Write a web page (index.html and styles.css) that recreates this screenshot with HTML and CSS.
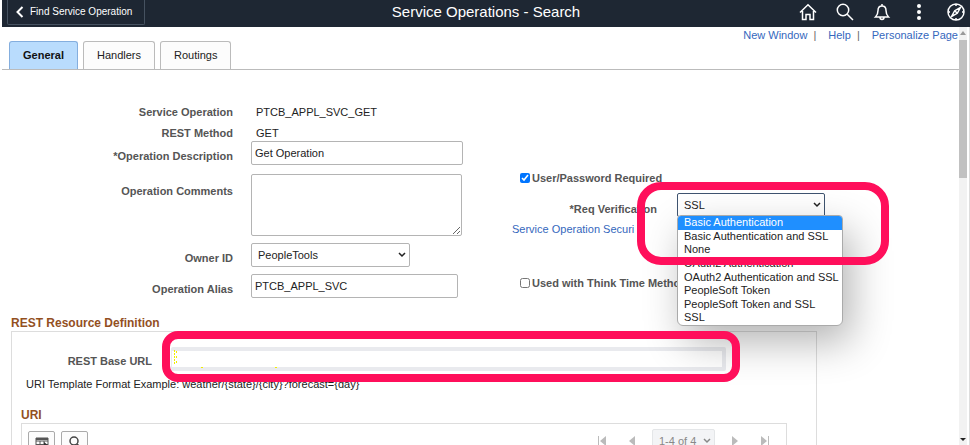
FILE: index.html
```html
<!DOCTYPE html>
<html lang="en">
<head>
<meta charset="utf-8">
<title>Service Operations - Search</title>
<link rel="stylesheet" href="styles.css">
</head>
<body>
<header class="banner">
  <div class="banner-side"><button class="back" type="button"><svg width="8" height="12" viewBox="0 0 8 12"><path d="M6.500 1 1.500 6l5 5" fill="none" stroke="currentColor" stroke-width="2"/></svg>Find Service Operation</button></div>
  <h1>Service Operations - Search</h1>
  <nav class="banner-side tools" aria-label="Tools">
    <button type="button" aria-label="Home"><svg width="18" height="18" viewBox="0 0 18 18"><path d="M1 9.500 9 1.700l8 7.800M3.500 8v8.500h3.500v-5h4v5h3.500V8"/></svg></button>
    <button type="button" aria-label="Search"><svg width="18" height="18" viewBox="0 0 18 18"><circle cx="7" cy="7" r="5.700"/><path d="m11.200 11.200 5.800 5.800"/></svg></button>
    <button type="button" aria-label="Notifications"><svg width="18" height="18" viewBox="0 0 18 18"><path d="M2.500 14h13c-2-2-2.500-3-2.500-6.500C13 4.500 11.500 3 9 3S5 4.500 5 7.500C5 11 4.500 12 2.500 14zM9 1v2M7 14.500c0 2.500 4 2.500 4 0"/></svg></button>
    <button type="button" aria-label="Actions"><svg width="18" height="18" viewBox="0 0 18 18"><g fill="currentColor" stroke="none"><circle cx="9" cy="3" r="2"/><circle cx="9" cy="9" r="2"/><circle cx="9" cy="15" r="2"/></g></svg></button>
    <button type="button" aria-label="Navigation"><svg width="18" height="18" viewBox="0 0 18 18"><circle cx="9" cy="9" r="8"/><path d="m13.500 4.500-3.200 5.800-5.800 3.200 3.200-5.800zM9 1v2M9 15v2M1 9h2M15 9h2M7.700 7.700l2.600 2.600"/></svg></button>
  </nav>
</header>
<div class="body">
  <main>
    <nav class="page-links" aria-label="Page"><a href="#">New Window</a><span class="bar">|</span><a href="#">Help</a><span class="bar">|</span><a href="#">Personalize Page</a></nav>
    <nav class="tabs" aria-label="Sections"><a class="tab active" href="#">General</a><a class="tab" href="#">Handlers</a><a class="tab" href="#">Routings</a></nav>
    <form class="form">
      <div class="left">
        <div class="row plain"><span class="label">Service Operation</span><span class="value">PTCB_APPL_SVC_GET</span></div>
        <div class="row plain"><span class="label">REST Method</span><span class="value">GET</span></div>
        <div class="row"><label class="label" for="desc">*Operation Description</label><input class="field desc" id="desc" type="text" value="Get Operation"></div>
        <div class="row comments-row"><label class="label" for="comments">Operation Comments</label><textarea class="field comments" id="comments"></textarea></div>
        <div class="row"><label class="label" for="owner">Owner ID</label><span class="picker owner"><select class="field" id="owner"><option>PeopleTools</option></select><svg class="arrow" width="8" height="6" viewBox="0 0 8 6"><path d="m1 1 3 3 3-3"/></svg></span></div>
        <div class="row"><label class="label" for="alias">Operation Alias</label><input class="field alias" id="alias" type="text" value="PTCB_APPL_SVC"></div>
      </div>
      <div class="right">
        <div class="check"><input id="password" type="checkbox" checked><label for="password">User/Password Required</label></div>
        <div class="verify">
          <label class="label" for="verification">*Req Verification</label>
          <span class="picker verification"><select class="field" id="verification"><option>SSL</option></select><svg class="arrow" width="8" height="6" viewBox="0 0 8 6"><path d="m1 1 3 3 3-3"/></svg>
            <ul class="menu">
              <li class="current">Basic Authentication</li><li>Basic Authentication and SSL</li><li>None</li><li>OAuth2 Authentication</li><li>OAuth2 Authentication and SSL</li><li>PeopleSoft Token</li><li>PeopleSoft Token and SSL</li><li>SSL</li>
            </ul>
          </span>
          <span class="highlight highlight-verify"></span>
        </div>
        <a class="security" href="#">Service Operation Securi</a>
        <div class="check"><input id="think" type="checkbox"><label for="think">Used with Think Time Method</label></div>
      </div>
    </form>
    <section class="resource">
      <h2>REST Resource Definition</h2>
      <div class="group">
        <div class="url-row"><label class="label" for="url">REST Base URL</label><span class="url-wrap"><input class="url" id="url" type="text" readonly><svg class="marks" width="110" height="20" viewBox="0 0 110 20"><path d="M1.500 1v15M3.500 2v2M3.500 7v2M3.500 12v2M28 18.500h3M102 18.500h2" fill="none" stroke="#f0ee00" stroke-width="1" stroke-dasharray="2 1"/></svg><span class="highlight highlight-url"></span></span></div>
        <p>URI Template Format Example: weather/{state}/{city}?forecast={day}</p>
        <h3>URI</h3>
        <div class="grid-bar">
          <button class="tool" type="button" aria-label="Personalize grid"><svg width="14" height="13" viewBox="0 0 14 13"><path d="M1 1h12v10H1zM1 4h12M1 7.500h12M5 4v7M9 4v7" fill="none" stroke="#555"/><path d="M1 1h12v2H1z" fill="#555"/><path d="m9 5 5 4-3 1-2 2z" fill="#333"/></svg></button>
          <button class="tool" type="button" aria-label="Find"><svg width="14" height="14" viewBox="0 0 14 14"><circle cx="6" cy="5" r="4" fill="none" stroke="#444" stroke-width="1.500"/><path d="m9 8 4 4" stroke="#444" stroke-width="1.500"/></svg></button>
          <div class="pager">
            <button type="button" aria-label="First"><svg width="10" height="10" viewBox="0 0 10 10"><path d="M1 0h1v10H1zM9 0v10L3 5z"/></svg></button>
            <button type="button" aria-label="Previous"><svg width="10" height="10" viewBox="0 0 10 10"><path d="M8 0v10L2 5z"/></svg></button>
            <span class="picker range"><select aria-label="Rows"><option>1-4 of 4</option></select><svg class="arrow" width="8" height="6" viewBox="0 0 8 6"><path d="m1 1 3 3 3-3"/></svg></span>
            <button type="button" aria-label="Next"><svg width="10" height="10" viewBox="0 0 10 10"><path d="M2 0v10l6-5z"/></svg></button>
            <button type="button" aria-label="Last"><svg width="10" height="10" viewBox="0 0 10 10"><path d="M8 0h1v10H8zM1 0v10l6-5z"/></svg></button>
          </div>
        </div>
      </div>
    </section>
  </main>
  <div class="scroll"><svg width="8" height="13" viewBox="0 0 8 13"><path d="m1 8 3-4 3 4z" fill="#999"/></svg><span class="thumb"></span><svg width="8" height="13" viewBox="0 0 8 13"><path d="m1 6 3 3 3-3z" fill="#222"/></svg></div>
</div>
</body>
</html>
```
FILE: styles.css
```css
* { box-sizing: border-box; }
body {
  margin: 0;
  height: 100vh;
  overflow: hidden;
  display: flex;
  flex-direction: column;
  background: #fff;
  color: #222;
  font: 11px/14px "Liberation Sans", Arial, sans-serif;
}
button, input, select, textarea { font: inherit; color: inherit; margin: 0; }
a { color: #3467bd; text-decoration: none; }
h1, h2, h3, p, ul { margin: 0; padding: 0; }

.banner {
  flex: none;
  height: 27px;
  margin-left: 2px;
  padding: 0 5px;
  display: flex;
  align-items: flex-start;
  background: #1e2733;
  color: #fff;
}
.banner-side { flex: 1; display: flex; }
.banner h1 { font-size: 15px; line-height: 23px; font-weight: 400; }
.back {
  display: flex;
  align-items: center;
  gap: 6px;
  height: 25px;
  padding: 0 12px 0 8px;
  border: 1px solid #465260;
  border-top: 0;
  border-radius: 0 0 2px 2px;
  background: none;
  font-size: 10px;
}
.tools { justify-content: flex-end; align-items: center; gap: 19px; }
.tools button { display: block; padding: 2px 0 0; border: 0; background: none; height: 22px; }
.tools svg { display: block; fill: none; stroke: currentColor; stroke-width: 1.5; }

.body { flex: 1; min-height: 0; display: flex; padding-right: 2px; border-right: 1px solid #ddd; }
main { flex: 1; min-width: 0; padding-left: 2px; overflow: hidden; }
.page-links { display: flex; justify-content: flex-end; height: 14px; padding: 1px 1px 0 0; }
.page-links .bar { margin: 0 12px 0 6px; color: #666; }
.tabs { display: flex; gap: 5px; padding-left: 7px; height: 29px; border-bottom: 1px solid #bbb; }
.tab {
  padding: 6px 13px 0;
  border: 1px solid #bbb;
  border-bottom: 0;
  border-radius: 3px 3px 0 0;
  background: #fcfcfc;
  color: #222;
}
.tab.active { border-color: #84aede; background: #b9dcfd; font-weight: 700; color: #111; }

.form { display: flex; padding-top: 31px; }
.left { display: flex; flex-direction: column; gap: 7px; width: 508px; }
.row { display: flex; gap: 18px; }
.label { color: #555; font-weight: 700; }
.row .label { width: 231px; text-align: right; padding-top: 8px; }
.plain { height: 14px; }
.plain .label { padding: 4px 0 0; }
.plain .value { padding: 4px 0 0 5px; }
.plain + .row:not(.plain) { margin-top: -2px; }
.comments-row { margin-top: 2px; }
.comments-row .label { padding-top: 10px; }
.field { border: 1px solid #b4b4b4; border-radius: 2px; background: #fff; height: 24px; padding: 0 3px; color: #222; }
.desc { width: 212px; }
.comments { width: 211px; height: 62px; resize: both; }
.alias { width: 207px; }
.picker { position: relative; display: block; }
.picker select { width: 100%; appearance: none; padding: 0 6px; }
.arrow { position: absolute; right: 4px; top: 9px; fill: none; stroke: #222; stroke-width: 1.5; pointer-events: none; }
.owner { width: 159px; }
.right { flex: 1; display: flex; flex-direction: column; padding: 70px 0 0 2px; }
.check { display: flex; align-items: center; gap: 2px; padding-left: 8px; height: 14px; color: #555; font-weight: 700; }
.check input { width: 10px; height: 10px; }
.verify { position: relative; display: flex; margin-top: 8px; }
.verify .label { width: 145px; text-align: right; padding-top: 9px; margin-right: 20px; }
.verification { width: 148px; }
.verification .field { border-color: #3f5470; }
.menu {
  position: absolute;
  z-index: 2;
  left: 0;
  top: 22px;
  width: 166px;
  height: 111px;
  display: grid;
  grid-template-rows: repeat(8, 1fr);
  overflow: hidden;
  list-style: none;
  white-space: nowrap;
  background: #fff;
  border: 1px solid #aaa;
  border-radius: 4px 4px 6px 6px;
  box-shadow: 8px 16px 40px rgba(0, 0, 0, .3);
}
.menu li { padding-left: 6px; min-height: 0; line-height: 13px; }
.menu .current { background: #1f8fff; color: #fff; }
.highlight { position: absolute; z-index: 3; border: 8px solid #ff0f5b; pointer-events: none; }
.highlight-verify { left: 125px; top: -11px; width: 252px; height: 83px; border-radius: 24px; }
.security { margin: 5px 0 40px; }

.resource { padding: 17px 0 0 9px; }
h2, h3 { color: #93501f; font-size: 12px; line-height: 16px; }
.group { max-width: 806px; height: 160px; border: 1px solid #ddd; padding: 15px 29px 0 9px; }
.url-row { display: flex; }
.url-row .label { width: 131px; padding-top: 7px; text-align: right; margin-right: 19px; }
.url-wrap { position: relative; width: 555px; height: 24px; }
.url { width: 100%; height: 24px; border: 4px solid #e9eaee; border-left-width: 1px; border-radius: 2px; background: #fff; }
.marks { position: absolute; left: 2px; top: 2px; }
.highlight-url { left: -9px; top: -16px; width: 578px; height: 51px; border-radius: 16px; }
.group p { padding: 6px 0 0 5px; }
.group h3 { margin-top: 16px; }
.grid-bar { display: flex; gap: 6px; height: 60px; border: 1px solid #ddd; padding: 7px 16px 0 6px; }
.tool { width: 27px; height: 24px; padding: 0; display: flex; align-items: center; justify-content: center; border: 1px solid #aaa; border-radius: 2px; background: #fcfcfc; }
.pager { margin-left: auto; display: flex; align-items: center; gap: 15px; height: 20px; }
.pager button { padding: 0; border: 0; background: none; width: 10px; height: 10px; }
.pager button:first-child { margin-right: 5px; }
.pager button:last-child { margin-left: 5px; }
.pager button svg { display: block; fill: #bbb; }
.range { width: 63px; }
.range select { height: 24px; border: 1px solid #e4e6e8; border-radius: 2px; background: #f3f4f6; color: #888; }
.range .arrow { stroke: #888; }

.scroll { flex: none; width: 8px; display: flex; flex-direction: column; align-items: center; background: #f2f2f2; }
.thumb { width: 8px; height: 138px; background: #c1c1c1; margin-bottom: auto; }
```
